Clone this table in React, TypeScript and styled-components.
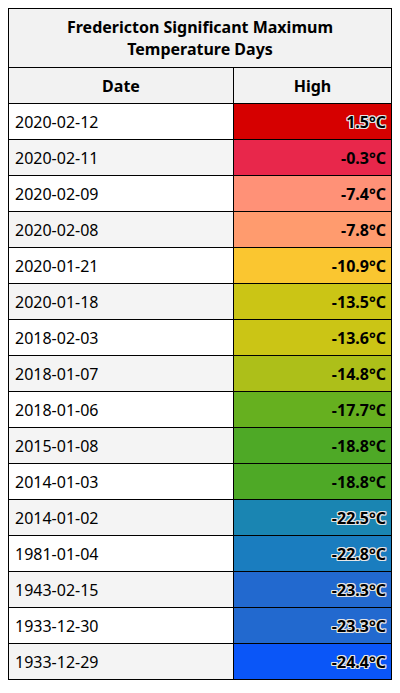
import React from 'react';
import styled, { createGlobalStyle } from 'styled-components';

const GlobalStyle = createGlobalStyle`
  body {
    margin: 8px;
    background: #ffffff;
    font-family: 'Noto Sans', 'Open Sans', sans-serif;
    color: #000;
  }
`;

const Table = styled.table`
  width: 384px;
  border-collapse: collapse;
  table-layout: fixed;
  font-size: 16px;
`;

const TitleCell = styled.th`
  background: #f2f2f2;
  border: 1px solid #000;
  padding: 7px 6px;
  line-height: 22px;
  font-weight: 700;
  text-align: center;
`;

const HeadCell = styled.th`
  background: #f2f2f2;
  border: 1px solid #000;
  height: 35px;
  padding: 0 6px;
  font-weight: 700;
  text-align: center;
`;

const Row = styled.tr<{ $alt: boolean }>`
  background: ${({ $alt }) => ($alt ? '#f4f4f4' : '#ffffff')};
`;

const DateCell = styled.td`
  border: 1px solid #000;
  height: 35px;
  padding: 0 6px;
  line-height: 22px;
`;

const HighCell = styled.td<{ $bg: string; $glow: boolean }>`
  border: 1px solid #000;
  height: 35px;
  padding: 0 5px;
  text-align: right;
  font-weight: 700;
  background: ${({ $bg }) => $bg};
  text-shadow: ${({ $glow }) =>
    $glow
      ? '-1px -1px 0 #e6e6e6, 1px -1px 0 #e6e6e6, -1px 1px 0 #e6e6e6, 1px 1px 0 #e6e6e6, 0 1px 0 #e6e6e6, 0 -1px 0 #e6e6e6, 1px 0 0 #e6e6e6, -1px 0 0 #e6e6e6'
      : 'none'};
`;

const days = [
  { date: '2020-02-12', high: '1.5°C', bg: '#d60000', glow: true },
  { date: '2020-02-11', high: '-0.3°C', bg: '#e8274b', glow: false },
  { date: '2020-02-09', high: '-7.4°C', bg: '#ff9177', glow: false },
  { date: '2020-02-08', high: '-7.8°C', bg: '#ff9b6e', glow: false },
  { date: '2020-01-21', high: '-10.9°C', bg: '#fac630', glow: false },
  { date: '2020-01-18', high: '-13.5°C', bg: '#cbc515', glow: false },
  { date: '2018-02-03', high: '-13.6°C', bg: '#cbc515', glow: false },
  { date: '2018-01-07', high: '-14.8°C', bg: '#adbf19', glow: false },
  { date: '2018-01-06', high: '-17.7°C', bg: '#66b01f', glow: false },
  { date: '2015-01-08', high: '-18.8°C', bg: '#4ea926', glow: false },
  { date: '2014-01-03', high: '-18.8°C', bg: '#4ea926', glow: false },
  { date: '2014-01-02', high: '-22.5°C', bg: '#1a85b2', glow: true },
  { date: '1981-01-04', high: '-22.8°C', bg: '#1a7dbf', glow: true },
  { date: '1943-02-15', high: '-23.3°C', bg: '#2269cf', glow: true },
  { date: '1933-12-30', high: '-23.3°C', bg: '#2269cf', glow: true },
  { date: '1933-12-29', high: '-24.4°C', bg: '#0a56f8', glow: true },
];

const App = () => (
  <>
    <GlobalStyle />
    <Table>
      <colgroup>
        <col style={{ width: '225px' }} />
        <col />
      </colgroup>
      <thead>
        <tr>
          <TitleCell colSpan={2}>
            Fredericton Significant Maximum
            <br />
            Temperature Days
          </TitleCell>
        </tr>
        <tr>
          <HeadCell>Date</HeadCell>
          <HeadCell>High</HeadCell>
        </tr>
      </thead>
      <tbody>
        {days.map((d, i) => (
          <Row key={d.date} $alt={i % 2 === 1}>
            <DateCell>{d.date}</DateCell>
            <HighCell $bg={d.bg} $glow={d.glow}>{d.high}</HighCell>
          </Row>
        ))}
      </tbody>
    </Table>
  </>
);

export default App;
